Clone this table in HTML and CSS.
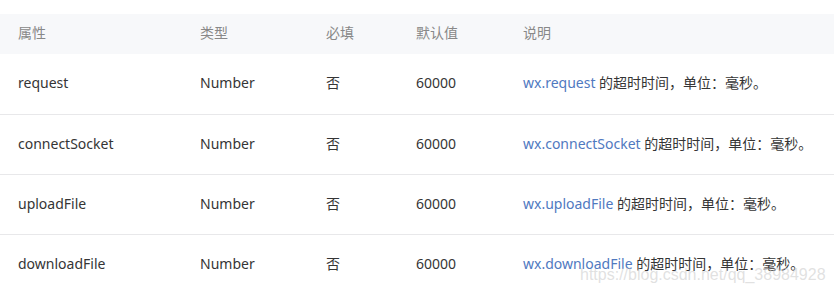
FILE: index.html
```html
<!DOCTYPE html>
<html lang="zh">
<head>
<meta charset="utf-8">
<link rel="stylesheet" href="styles.css">
</head>
<body>
<div class="page">
  <table class="props">
    <colgroup>
      <col class="c1"><col class="c2"><col class="c3"><col class="c4"><col class="c5">
    </colgroup>
    <thead>
      <tr><th>属性</th><th>类型</th><th>必填</th><th>默认值</th><th>说明</th></tr>
    </thead>
    <tbody>
      <tr><td>request</td><td>Number</td><td>否</td><td>60000</td><td><a class="lnk">wx.request</a> 的超时时间，单位：毫秒。</td></tr>
      <tr><td>connectSocket</td><td>Number</td><td>否</td><td>60000</td><td><a class="lnk">wx.connectSocket</a> 的超时时间，单位：毫秒。</td></tr>
      <tr><td>uploadFile</td><td>Number</td><td>否</td><td>60000</td><td><a class="lnk">wx.uploadFile</a> 的超时时间，单位：毫秒。</td></tr>
      <tr><td>downloadFile</td><td>Number</td><td>否</td><td>60000</td><td><a class="lnk">wx.downloadFile</a> 的超时时间，单位：毫秒。</td></tr>
    </tbody>
  </table>
  <div class="watermark">https://blog.csdn.net/qq_38984928</div>
</div>
</body>
</html>
```
FILE: styles.css
```css
html, body {
  margin: 0;
  padding: 0;
  background: #fff;
}
.page {
  position: relative;
  width: 834px;
  height: 293px;
  overflow: hidden;
  padding-top: 14px;
  box-sizing: border-box;
  font-family: "Noto Sans", "Noto Sans CJK SC", sans-serif;
  font-size: 14px;
  color: #353535;
}
.props {
  border-collapse: collapse;
  width: 834px;
  table-layout: fixed;
}
.c1 { width: 182px; }
.c2 { width: 126px; }
.c3 { width: 90px; }
.c4 { width: 107px; }
.c5 { width: 329px; }
.props th {
  background: #f7f8fa;
  color: #888;
  font-weight: normal;
  text-align: left;
  height: 38px;
  padding: 0 0 2px 18px;
  vertical-align: middle;
  line-height: 18px;
}
.props td {
  height: 57px;
  padding: 0 0 2px 18px;
  vertical-align: middle;
  border-top: 1px solid #e8e8ea;
  white-space: nowrap;
  line-height: 18px;
}
.props tbody tr:first-child td {
  border-top: none;
  height: 58px;
}
.lnk {
  color: #5079bf;
  text-decoration: none;
}
.watermark {
  position: absolute;
  left: 580px;
  top: 266px;
  font-family: "Liberation Sans", Arial, sans-serif;
  font-size: 16px;
  color: rgba(200, 200, 200, 0.55);
  white-space: nowrap;
}
```
